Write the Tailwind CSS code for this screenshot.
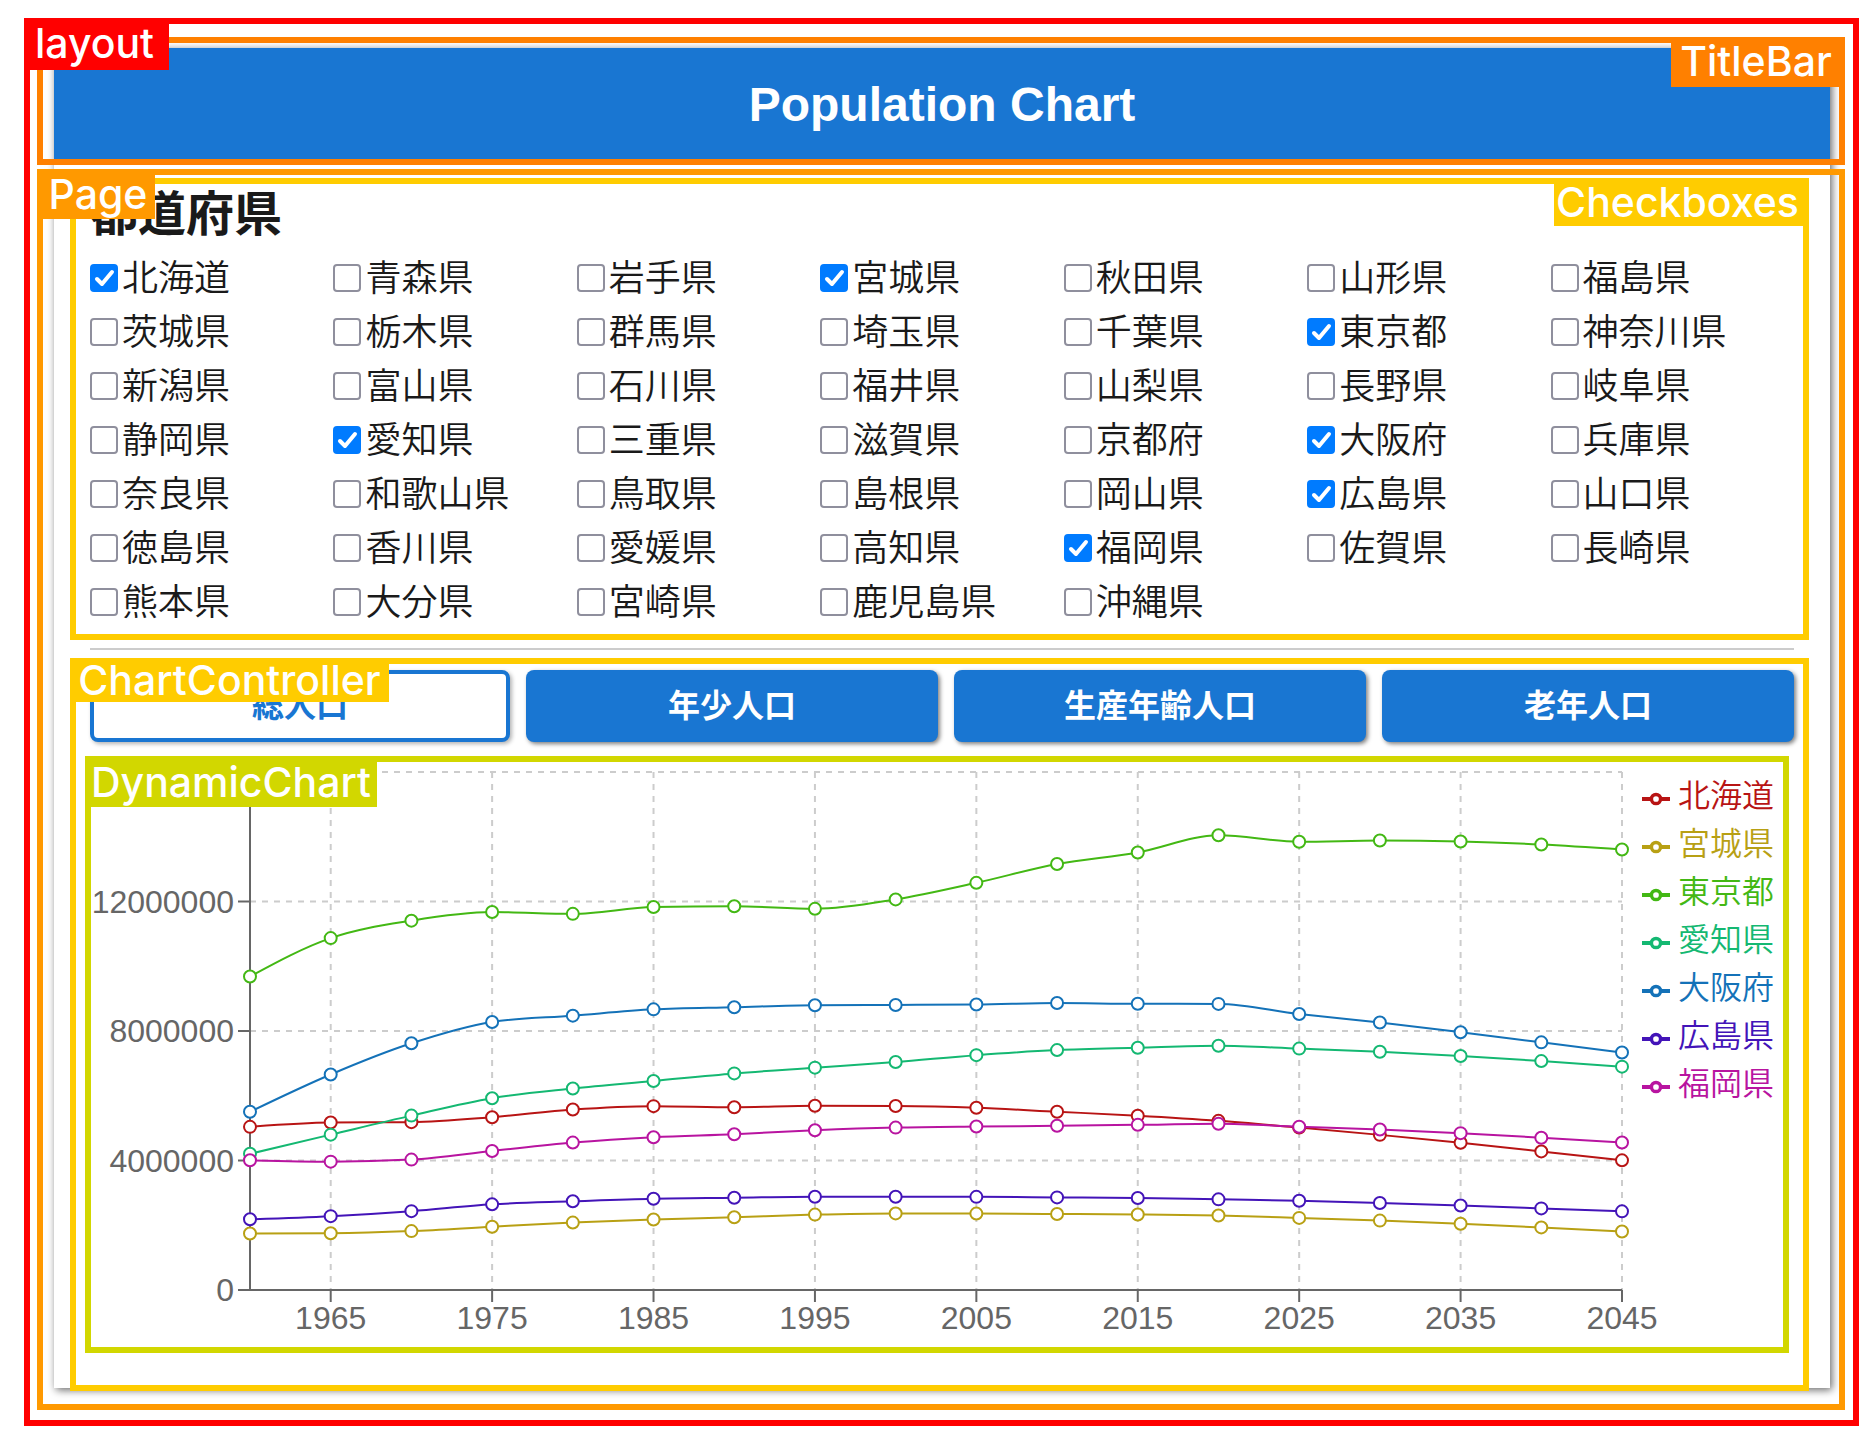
<!DOCTYPE html>
<html lang="ja">
<head>
<meta charset="utf-8">
<meta name="viewport" content="width=device-width, initial-scale=1">
<title>Population Chart</title>
<script src="https://cdn.jsdelivr.net/npm/@tailwindcss/browser@4"></script>
</head>
<body class="bg-white pt-12 pr-10 pb-14 pl-[54px] font-['Liberation_Sans','Noto_Sans_CJK_JP',sans-serif] text-[#1a1a1a]">
<div class="relative bg-white shadow-[2px_2px_8px_rgba(0,0,0,0.6)]">

  <header class="relative flex h-28 items-center justify-center bg-[#1976d2] pt-[2px]">
    <h1 class="text-5xl font-bold text-white">Population Chart</h1>
    <div class="pointer-events-none absolute -top-[11px] -right-[15px] -bottom-[5px] -left-[17px] border-6 border-[#ff8000]">
      <span class="absolute -top-[6px] -right-[6px] flex h-[50px] w-[174px] items-center justify-center bg-[#ff8000] pr-1 font-['Inter',sans-serif] text-[41px] font-medium text-white">TitleBar</span>
    </div>
  </header>

  <main class="relative px-9 pt-[17px] pb-[35px]">
    <section class="relative">
      <h2 class="text-5xl leading-[76px] font-bold">都道府県</h2>
      <div id="prefectures" class="-mt-[2px] grid grid-cols-7"></div>
      <div class="pointer-events-none absolute top-px -right-[15px] -bottom-[11px] -left-5 border-6 border-[#ffcc00]">
        <span class="absolute -top-[6px] -right-[6px] flex h-12 w-[255px] items-center justify-center bg-[#ffcc00] pt-px pr-2 font-['Inter',sans-serif] text-[41px] font-medium text-white">Checkboxes</span>
      </div>
    </section>

    <hr class="mt-[19px] mb-5 border-t-2 border-[#ccc]">

    <section class="relative">
      <div class="flex gap-4 text-[32px] font-bold">
        <button type="button" class="h-[72px] flex-1 basis-2 rounded-lg border-4 border-[#1976d2] bg-white text-[#1976d2] shadow-[2px_2px_4px_rgba(0,0,0,0.3)]">総人口</button>
        <button type="button" class="h-[72px] flex-1 rounded-lg bg-[#1976d2] text-white shadow-[2px_2px_4px_rgba(0,0,0,0.5)]">年少人口</button>
        <button type="button" class="h-[72px] flex-1 rounded-lg bg-[#1976d2] text-white shadow-[2px_2px_4px_rgba(0,0,0,0.5)]">生産年齢人口</button>
        <button type="button" class="h-[72px] flex-1 rounded-lg bg-[#1976d2] text-white shadow-[2px_2px_4px_rgba(0,0,0,0.5)]">老年人口</button>
      </div>
      <div class="relative mt-[14px]">
        <svg id="chart" class="block h-auto w-full" viewBox="0 0 1704 597" role="img" aria-label="総人口"></svg>
        <div class="pointer-events-none absolute top-0 right-[5px] bottom-0 -left-[5px] border-6 border-[#d2d700]">
          <span class="absolute -top-[6px] -left-[6px] flex h-[51px] w-[292px] items-center justify-center bg-[#d2d700] pt-[2px] font-['Inter',sans-serif] text-[41px] font-medium text-white">DynamicChart</span>
        </div>
      </div>
      <div class="pointer-events-none absolute -top-3 -right-[15px] -bottom-[38px] -left-5 border-6 border-[#ffcc00]">
        <span class="absolute -top-[6px] -left-[6px] flex h-11 w-[319px] items-center justify-center bg-[#ffcc00] pt-[2px] font-['Inter',sans-serif] text-[41px] font-medium text-white">ChartController</span>
      </div>
    </section>

    <div class="pointer-events-none absolute top-[9px] -right-[15px] -bottom-[22px] -left-[17px] border-6 border-[#ff9900]">
      <span class="absolute -top-[6px] -left-[6px] flex h-[50px] w-[118px] items-center justify-center bg-[#ff9900] pt-px pl-1 font-['Inter',sans-serif] text-[41px] font-medium text-white">Page</span>
    </div>
  </main>

  <div class="pointer-events-none absolute -top-[30px] -right-[29px] -bottom-[38px] -left-[30px] border-6 border-[#ff0000]">
    <span class="absolute -top-[6px] -left-[6px] flex h-[52px] w-[145px] items-center justify-center bg-[#ff0000] pr-1 font-['Inter',sans-serif] text-[41px] font-medium text-white">layout</span>
  </div>
</div>

<script>
const names = ('北海道 青森県 岩手県 宮城県 秋田県 山形県 福島県 茨城県 栃木県 群馬県 埼玉県 千葉県 東京都 神奈川県 ' +
  '新潟県 富山県 石川県 福井県 山梨県 長野県 岐阜県 静岡県 愛知県 三重県 滋賀県 京都府 大阪府 兵庫県 ' +
  '奈良県 和歌山県 鳥取県 島根県 岡山県 広島県 山口県 徳島県 香川県 愛媛県 高知県 福岡県 佐賀県 長崎県 ' +
  '熊本県 大分県 宮崎県 鹿児島県 沖縄県').split(' ');

const series = [
  ['北海道', [5039206,5171800,5184287,5338206,5575989,5679439,5643647,5692321,5683062,5627737,5506419,5381733,5224614,5016554,4791592,4546357,4280427,4004973]],
  ['宮城県', [1743195,1753126,1819223,1955267,2082320,2176295,2248558,2328739,2365320,2360218,2348165,2333899,2301996,2227472,2143601,2046200,1933258,1809021]],
  ['東京都', [9683802,10869244,11408071,11673554,11618281,11829363,11855563,11773605,12064101,12576601,13159388,13515271,14047594,13845936,13882538,13852150,13758624,13606683]],
  ['愛知県', [4206313,4798653,5386163,5923569,6221638,6455172,6690603,6868336,7043300,7254704,7410719,7483128,7542415,7455740,7359302,7228276,7070914,6899276]],
  ['大阪府', [5504746,6657189,7620480,8278925,8473446,8668095,8734516,8797268,8805081,8817166,8865245,8839469,8837685,8526202,8262029,7962983,7649229,7335352]],
  ['広島県', [2184043,2281146,2436135,2646324,2739161,2819200,2849847,2881748,2878915,2876642,2860750,2843990,2799702,2757600,2688800,2609300,2520500,2428818]],
  ['福岡県', [4006679,3964611,4027416,4292963,4553461,4719259,4811050,4933393,5015699,5049908,5071968,5101556,5135214,5043494,4955359,4845000,4704863,4554473]],
];

const selected = new Set(series.map(s => s[0]));
document.getElementById('prefectures').innerHTML = names.map((name, i) => `
  <label for="pref-${i}" class="flex h-[54px] items-center gap-1 text-[36px] leading-[52px] font-[350] whitespace-nowrap">
    <span class="relative block size-7 shrink-0">
      <input id="pref-${i}" type="checkbox" ${selected.has(name) ? 'checked' : ''} class="peer block size-7 appearance-none rounded-[4px] border-2 border-[#8f8f9d] bg-white checked:border-[#007bff] checked:bg-[#007bff]">
      <svg class="pointer-events-none absolute inset-0 hidden size-7 peer-checked:block" viewBox="0 0 28 28" fill="none" stroke="#fff" stroke-width="4" stroke-linecap="round" stroke-linejoin="round"><path d="M7 15l5 5L22 8"/></svg>
    </span>
    <span class="pt-[2px]">${name}</span>
  </label>`).join('');

/* Plot area inside the 1704 x 597 view box */
const left = 160, right = 1532, top_ = 16, bottom = 534;
const x = i => left + (right - left) * i / 17;
const y = v => bottom - (bottom - top_) * v / 16000000;

/* Monotone cubic interpolation through the points */
function curve(p) {
  const n = p.length, s = [], m = [];
  for (let i = 0; i < n - 1; i++) s.push((p[i + 1][1] - p[i][1]) / (p[i + 1][0] - p[i][0]));
  for (let i = 1; i < n - 1; i++) {
    m[i] = s[i - 1] * s[i] <= 0 ? 0 : Math.sign(s[i]) * 2 * Math.min(Math.abs(s[i - 1]), Math.abs(s[i]), Math.abs(s[i - 1] + s[i]) / 4);
  }
  m[0] = (3 * s[0] - m[1]) / 2;
  m[n - 1] = (3 * s[n - 2] - m[n - 2]) / 2;
  let d = `M${p[0]}`;
  for (let i = 0; i < n - 1; i++) {
    const h = (p[i + 1][0] - p[i][0]) / 3;
    d += `C${p[i][0] + h},${p[i][1] + h * m[i]} ${p[i + 1][0] - h},${p[i + 1][1] - h * m[i + 1]} ${p[i + 1]}`;
  }
  return d;
}

let grid = '', axis = '', labels = '', lines = '', legend = '';
for (const v of [0, 4000000, 8000000, 12000000, 16000000]) {
  if (v) grid += `<path d="M${left} ${y(v)}H${right}"/>`;
  if (v < 16000000) {
    axis += `<path d="M${left - 12} ${y(v)}H${left}"/>`;
    labels += `<text x="144" y="${y(v) + 11}" text-anchor="end">${v}</text>`;
  }
}
for (let i = 1; i < 18; i += 2) {
  grid += `<path d="M${x(i)} ${top_}V${bottom}"/>`;
  axis += `<path d="M${x(i)} ${bottom}v12"/>`;
  labels += `<text x="${x(i)}" y="573" text-anchor="middle">${1960 + i * 5}</text>`;
}
series.forEach(([name, data], k) => {
  const color = `hsl(${360 * k / 7} 80% 40%)`;
  const pts = data.map((v, i) => [x(i), y(v)]);
  lines += `<g stroke="${color}" stroke-width="2"><path fill="none" d="${curve(pts)}"/>` +
    pts.map(([a, b]) => `<circle cx="${a}" cy="${b}" r="6" fill="#fff"/>`).join('') + '</g>';
  const ly = 43 + 48 * k;
  legend += `<g stroke="${color}" stroke-width="4"><path d="M1552 ${ly}h28"/><circle cx="1566" cy="${ly}" r="4.6" stroke-width="3.5" fill="#fff"/></g>` +
    `<text x="1588" y="${ly + 8}" fill="${color}">${name}</text>`;
});
document.getElementById('chart').innerHTML =
  `<g stroke="#ccc" stroke-width="2" stroke-dasharray="6 6">${grid}</g>` +
  `<g stroke="#666" stroke-width="2">${axis}<path d="M${left} ${top_}V${bottom}H${right}" fill="none"/></g>` +
  `<g class="fill-[#666] text-[32px]">${labels}</g>${lines}<g class="text-[32px] font-[350]">${legend}</g>`;
</script>
</body>
</html>
